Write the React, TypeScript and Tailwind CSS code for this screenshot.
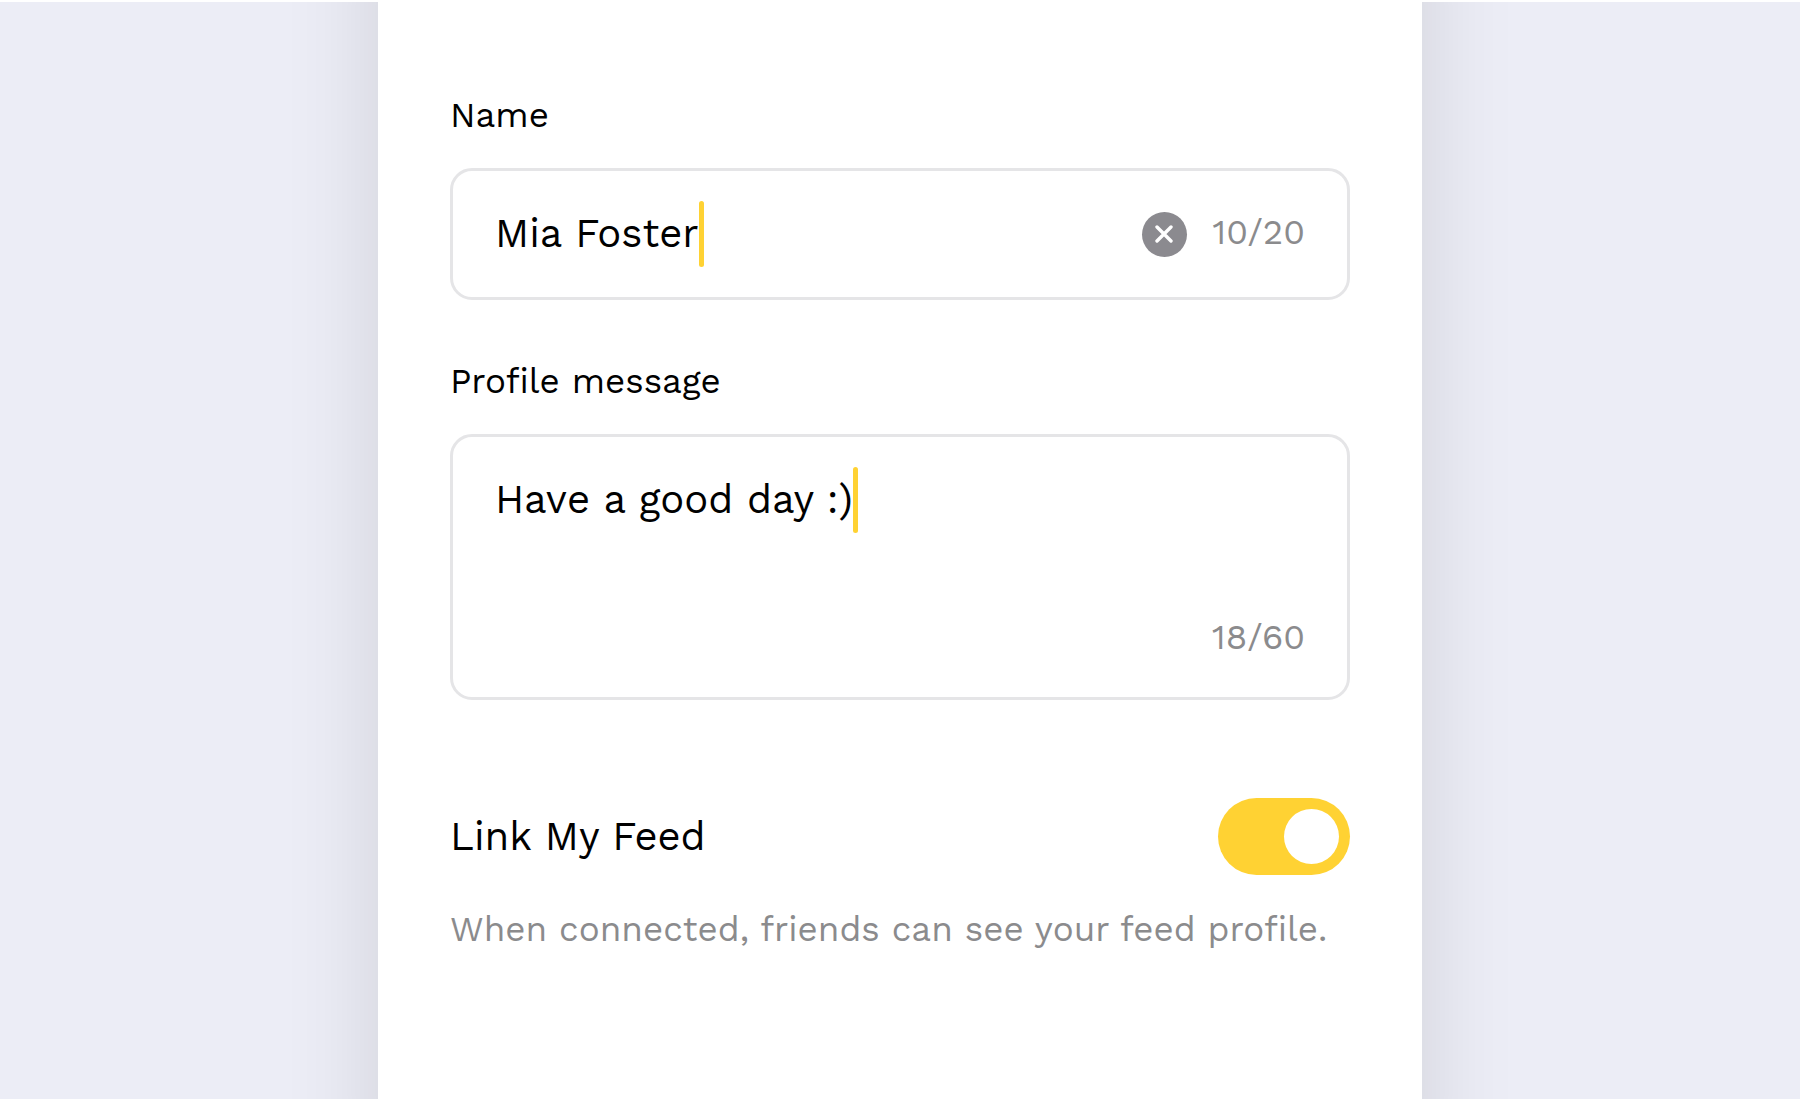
import { useState } from "react";

const NAME_LIMIT = 20;
const MESSAGE_LIMIT = 60;

function Caret() {
  return <span aria-hidden="true" className="h-[66px] w-[5px] shrink-0 rounded-full bg-[#ffd233]" />;
}

function Counter({ value, limit }: { value: string; limit: number }) {
  return (
    <span className="pb-1 text-[35px] leading-[48px] text-[#8b8b8d]">
      {value.length}/{limit}
    </span>
  );
}

export default function App() {
  const [name, setName] = useState("Mia Foster");
  const [message, setMessage] = useState("Have a good day :)");
  const [linked, setLinked] = useState(true);

  return (
    <div className="flex min-h-screen justify-center overflow-hidden border-t-2 border-white bg-[#ecedf6] font-['Work_Sans','Inter',sans-serif] text-black">
      <main className="-my-[100px] w-[58%] bg-white px-[72px] pt-[189px] pb-[100px] shadow-[0_0_90px_rgba(0,0,0,0.12)]">
        <label htmlFor="name" className="block text-[35px] leading-[48px]">
          Name
        </label>
        <div className="mt-[29px] flex h-[132px] items-center rounded-[22px] border-3 border-[#e5e5e7] px-[42px]">
          <div className="flex min-w-0 flex-1 items-center">
            <input
              id="name"
              type="text"
              value={name}
              maxLength={NAME_LIMIT}
              onChange={(e) => setName(e.target.value)}
              className="field-sizing-content min-w-0 text-[40px] leading-[66px] caret-transparent outline-none"
            />
            <Caret />
          </div>
          <button
            type="button"
            aria-label="Clear name"
            onClick={() => setName("")}
            className="mr-[26px] flex size-[45px] shrink-0 items-center justify-center rounded-full bg-[#8b8a8f]"
          >
            <svg viewBox="0 0 18 18" className="size-[18px]" fill="none" stroke="white" strokeWidth="3.4" strokeLinecap="round">
              <path d="M2 2l14 14M16 2L2 16" />
            </svg>
          </button>
          <Counter value={name} limit={NAME_LIMIT} />
        </div>

        <label htmlFor="message" className="mt-[57px] block text-[35px] leading-[48px]">
          Profile message
        </label>
        <div className="mt-[29px] flex min-h-[266px] flex-col justify-between rounded-[22px] border-3 border-[#e5e5e7] px-[42px] pt-[30px] pb-8">
          <div className="flex items-end">
            <textarea
              id="message"
              rows={1}
              value={message}
              maxLength={MESSAGE_LIMIT}
              onChange={(e) => setMessage(e.target.value)}
              className="field-sizing-content min-w-0 resize-none overflow-hidden text-[40px] leading-[66px] caret-transparent outline-none"
            />
            <Caret />
          </div>
          <div className="flex justify-end">
            <Counter value={message} limit={MESSAGE_LIMIT} />
          </div>
        </div>

        <div className="mt-[98px] flex items-center justify-between">
          <label htmlFor="feed" className="text-[40px] leading-[66px]">
            Link My Feed
          </label>
          <input
            id="feed"
            type="checkbox"
            role="switch"
            checked={linked}
            aria-describedby="feed-hint"
            onChange={(e) => setLinked(e.target.checked)}
            className="flex h-[77px] w-[132px] shrink-0 cursor-pointer appearance-none items-center rounded-full bg-[#d4d4d8] px-[11px] before:size-[55px] before:rounded-full before:bg-white checked:justify-end checked:bg-[#ffd233]"
          />
        </div>
        <p id="feed-hint" className="mt-[30px] text-[35px] leading-[48px] text-[#8b8b8d]">
          When connected, friends can see your feed profile.
        </p>
      </main>
    </div>
  );
}
